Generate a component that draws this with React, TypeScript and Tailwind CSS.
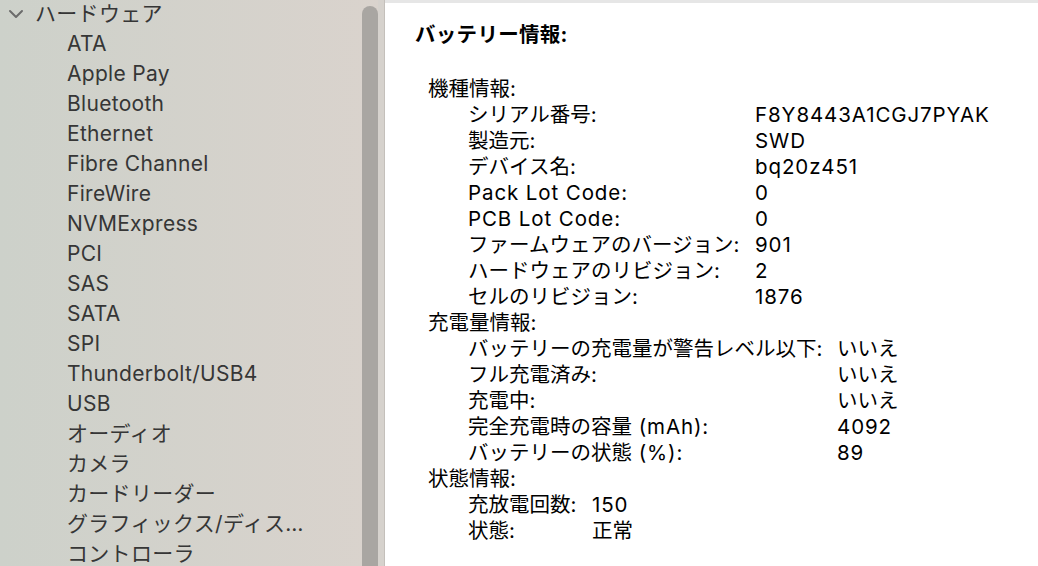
import React from "react";

const sidebarItems = [
  "ATA",
  "Apple Pay",
  "Bluetooth",
  "Ethernet",
  "Fibre Channel",
  "FireWire",
  "NVMExpress",
  "PCI",
  "SAS",
  "SATA",
  "SPI",
  "Thunderbolt/USB4",
  "USB",
  "オーディオ",
  "カメラ",
  "カードリーダー",
  "グラフィックス/ディス…",
  "コントローラ",
];

type Row = [string, string];

const group1: Row[] = [
  ["シリアル番号:", "F8Y8443A1CGJ7PYAK"],
  ["製造元:", "SWD"],
  ["デバイス名:", "bq20z451"],
  ["Pack Lot Code:", "0"],
  ["PCB Lot Code:", "0"],
  ["ファームウェアのバージョン:", "901"],
  ["ハードウェアのリビジョン:", "2"],
  ["セルのリビジョン:", "1876"],
];

const group2: Row[] = [
  ["バッテリーの充電量が警告レベル以下:", "いいえ"],
  ["フル充電済み:", "いいえ"],
  ["充電中:", "いいえ"],
  ["完全充電時の容量 (mAh):", "4092"],
  ["バッテリーの状態 (%):", "89"],
];

const group3: Row[] = [
  ["充放電回数:", "150"],
  ["状態:", "正常"],
];

function Mixed({ text }: { text: string }) {
  const parts = text.match(/[\x20-\x7e]+|[^\x20-\x7e]+/g) || [];
  return (
    <>
      {parts.map((p, i) =>
        /^[\x20-\x7e]+$/.test(p) ? (
          <span key={i} className="tracking-[0.9px]">
            {p}
          </span>
        ) : (
          <span key={i}>{p}</span>
        )
      )}
    </>
  );
}

function Group({ title, rows, labelW }: { title: string; rows: Row[]; labelW: string }) {
  return (
    <div>
      <div className="pl-[43px] h-[26px] whitespace-nowrap">
        <Mixed text={title} />
      </div>
      {rows.map(([k, v]) => (
        <div key={k} className="flex h-[26px] pl-[83px] whitespace-nowrap">
          <div className={labelW}>
            <Mixed text={k} />
          </div>
          <div>
            <Mixed text={v} />
          </div>
        </div>
      ))}
    </div>
  );
}

export default function App() {
  return (
    <div className="w-[1038px] h-[566px] overflow-hidden flex bg-white">
      <div
        className="w-[385px] h-full flex shrink-0 bg-gradient-to-r from-[#cdd1ca] to-[#dad3cd] text-[#363636] text-[21px] tracking-[0.3px] leading-[30px]"
        style={{ fontFamily: "Inter, 'Noto Sans CJK JP', sans-serif" }}
      >
        <div className="flex-1 -mt-px">
          <div className="flex items-center h-[30px]">
            <svg width="16" height="10" viewBox="0 0 16 10" className="ml-[8px] mr-[11px]">
              <path d="M2 2 L8 8 L14 2" fill="none" stroke="#6b6b6b" strokeWidth="2" strokeLinecap="round" strokeLinejoin="round" />
            </svg>
            <span>ハードウェア</span>
          </div>
          {sidebarItems.map((s) => (
            <div key={s} className="h-[30px] pl-[67px] whitespace-nowrap">
              {s}
            </div>
          ))}
        </div>
        <div className="w-[16px] h-full pt-[6px]">
          <div className="w-full h-full rounded-t-full bg-[#a9a6a2]" />
        </div>
        <div className="w-[7px] h-full bg-[#d6d2cd] border-r border-[#c4c0bb]" />
      </div>
      <div
        className="flex-1 h-full border-t-[3px] border-[#e6e6e6] text-black text-[20.5px] leading-[26px]"
        style={{ fontFamily: "Inter, 'Noto Sans CJK JP', sans-serif" }}
      >
        <div className="pl-[30px] pt-[19px] h-[46px] font-bold tracking-[0.3px] leading-[26px]">バッテリー情報:</div>
        <div className="h-[27px]" />
        <Group title="機種情報:" rows={group1} labelW="w-[287px]" />
        <Group title="充電量情報:" rows={group2} labelW="w-[369px]" />
        <Group title="状態情報:" rows={group3} labelW="w-[124px]" />
      </div>
    </div>
  );
}
